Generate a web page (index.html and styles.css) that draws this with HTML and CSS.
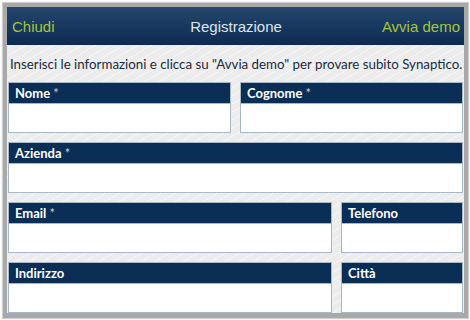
FILE: index.html
```html
<!DOCTYPE html>
<html lang="it">
<head>
<meta charset="utf-8">
<title>Registrazione</title>
<link rel="stylesheet" href="styles.css">
</head>
<body>
<div class="frame">
  <header class="bar">
    <span class="btn left">Chiudi</span>
    <span class="title">Registrazione</span>
    <span class="btn right">Avvia demo</span>
  </header>
  <main class="content">
    <p class="intro">Inserisci le informazioni e clicca su "Avvia demo" per provare subito Synaptico.</p>
    <div class="form">
      <div class="row two">
        <div class="field"><div class="label">Nome <span class="req">*</span></div><div class="input"></div></div>
        <div class="field"><div class="label">Cognome <span class="req">*</span></div><div class="input"></div></div>
      </div>
      <div class="row one">
        <div class="field"><div class="label">Azienda <span class="req">*</span></div><div class="input"></div></div>
      </div>
      <div class="row wide">
        <div class="field"><div class="label">Email <span class="req">*</span></div><div class="input"></div></div>
        <div class="field"><div class="label">Telefono</div><div class="input"></div></div>
      </div>
      <div class="row wide">
        <div class="field"><div class="label">Indirizzo</div><div class="input"></div></div>
        <div class="field"><div class="label">Città</div><div class="input"></div></div>
      </div>
    </div>
  </main>
</div>
</body>
</html>
```

FILE: styles.css
```css
html, body {
  margin: 0;
  padding: 0;
  background: #ffffff;
}
body {
  width: 470px;
  height: 320px;
  overflow: hidden;
}
.frame {
  margin: 3px 2px 2px 3px;
  border-style: solid;
  border-width: 4px 4px 5px 4px;
  border-color: #a9a9a9;
  height: 306px;
  display: flex;
  flex-direction: column;
  background-color: #ececec;
  background-image: repeating-linear-gradient(150deg, rgba(255,255,255,0.45) 0 1px, rgba(255,255,255,0) 1px 7px);
  box-shadow: 0 0 1px 1px #d0d0d0;
}
.bar {
  height: 38px;
  flex: none;
  display: grid;
  grid-template-columns: 1fr auto 1fr;
  align-items: center;
  padding: 0 4px 0 5px;
  background: linear-gradient(#25466d, #0b2b52);
  font-family: "Liberation Sans", Arial, sans-serif;
}
.btn {
  color: #a6c43c;
  font-size: 15px;
}
.btn.left { justify-self: start; }
.btn.right { justify-self: end; }
.title {
  color: #dfe5ec;
  font-size: 15px;
}
.content {
  flex: 1;
  padding: 0 1px 0 1px;
  display: flex;
  flex-direction: column;
}
.intro {
  margin: 0;
  height: 37px;
  line-height: 39px;
  padding-left: 2px;
  font-family: Lato, "Open Sans", sans-serif;
  font-size: 13.3px;
  color: #1b2b3d;
  white-space: nowrap;
}
.form {
  display: flex;
  flex-direction: column;
  gap: 9px;
}
.row {
  display: grid;
  column-gap: 9px;
}
.row.two { grid-template-columns: 1fr 1fr; }
.row.one { grid-template-columns: 1fr; }
.row.wide { grid-template-columns: 1fr 122px; }
.field {
  display: flex;
  flex-direction: column;
  border: 1px solid #a9b8c8;
  height: 49px;
}
.label {
  height: 20px;
  line-height: 20px;
  background: #0b2e57;
  color: #ffffff;
  font-family: Lato, "Open Sans", sans-serif;
  font-weight: bold;
  font-size: 13px;
  padding-left: 6px;
}
.req {
  color: #c3ccd6;
  font-weight: normal;
}
.input {
  flex: 1;
  background: #ffffff;
  border-top: 1px solid #a9b8c8;
}
```
